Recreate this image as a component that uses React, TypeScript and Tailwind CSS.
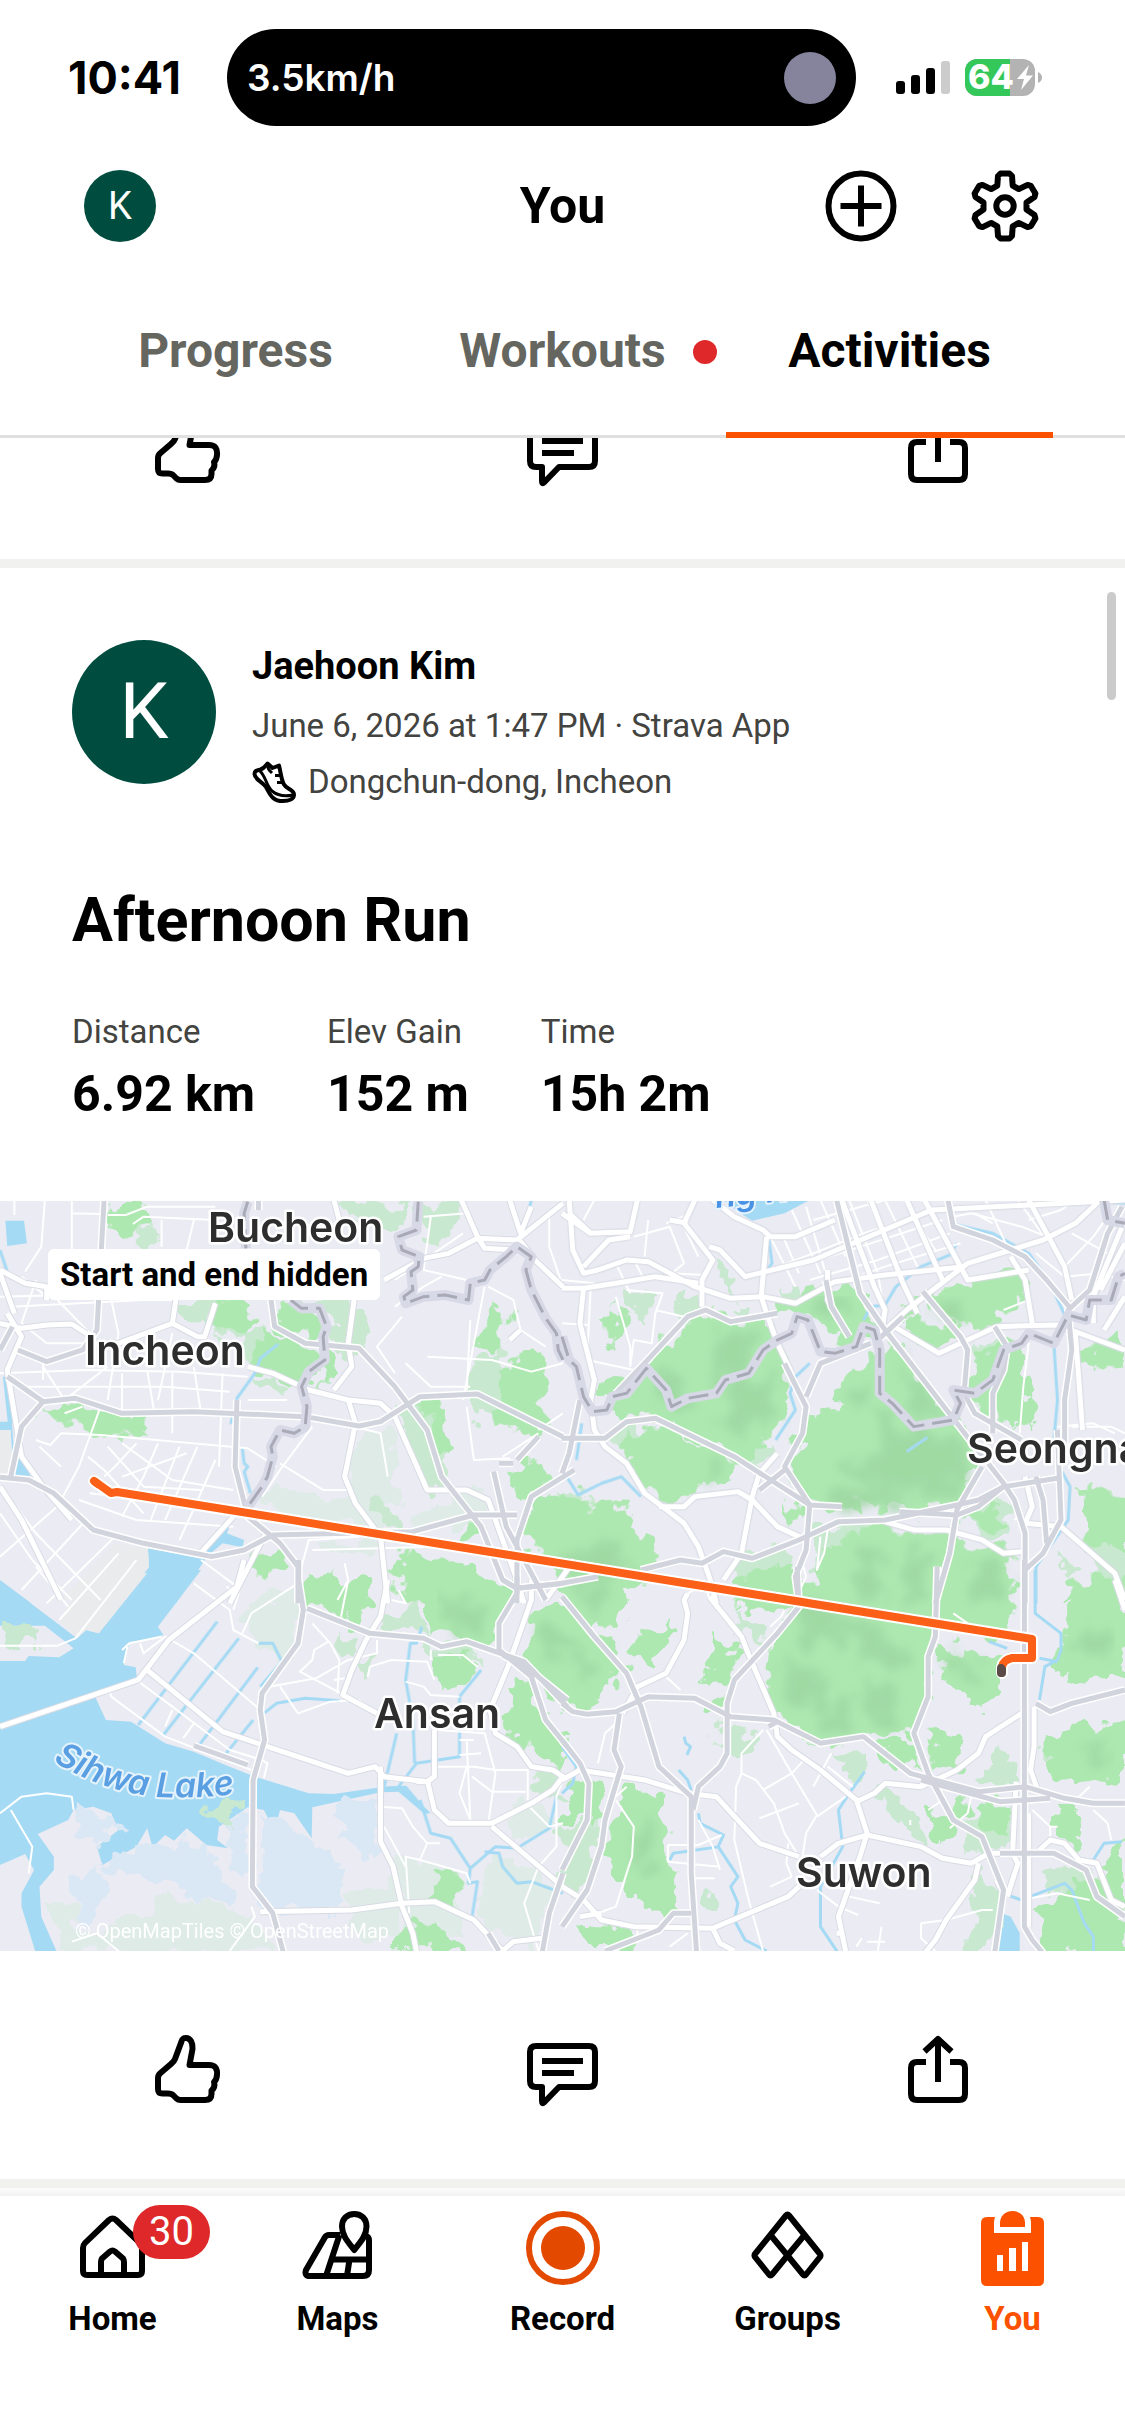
import type { ReactNode } from 'react';

/* ---------- icons ---------- */

type IconProps = { w: number; h: number; sw?: number; children: ReactNode; className?: string };

function Icon({ w, h, sw = 6, children, className = '' }: IconProps) {
  return (
    <svg
      width={w}
      height={h}
      viewBox={`0 0 ${w} ${h}`}
      fill="none"
      stroke="currentColor"
      strokeWidth={sw}
      strokeLinejoin="round"
      aria-hidden="true"
      className={`shrink-0 overflow-visible ${className}`}
    >
      {children}
    </svg>
  );
}

function gearPath() {
  const pts: string[] = [];
  const put = (x: number, y: number, deg: number) => {
    const a = (deg * Math.PI) / 180;
    const px = 36 + x * Math.cos(a) - y * Math.sin(a);
    const py = 36 + x * Math.sin(a) + y * Math.cos(a);
    pts.push(`${px.toFixed(1)} ${py.toFixed(1)}`);
  };
  for (let k = 0; k < 6; k++) {
    const deg = k * 60;
    put(-7, -30, deg);
    put(-4.5, -32.5, deg);
    put(4.5, -32.5, deg);
    put(7, -30, deg);
    put(21.5, -3.5, deg - 60);
    put(21.5, 3.5, deg - 60);
  }
  return `M${pts.join('L')}Z`;
}

const GearIcon = () => (
  <Icon w={72} h={72}>
    <path d={gearPath()} />
    <circle cx="36" cy="36" r="8.7" />
  </Icon>
);

const PlusIcon = () => (
  <Icon w={72} h={72}>
    <circle cx="36" cy="36" r="32.5" />
    <path d="M36 15.500V56.500M15.500 36H56.500" />
  </Icon>
);

const ThumbIcon = () => (
  <Icon w={66} h={68}>
    <path d="M34.500 30L37.500 14C38 8 35.500 3 31 3C28 3 27.200 4 26.500 6.500L20 24C19.200 26.300 18 27.500 16 29L5.500 38C3.700 39.500 3 40.500 3 43V54C3 57.500 4.500 58.500 7.500 58.500H13C15.500 58.500 17 59 18.500 60.500L21.500 63.500C22.800 64.700 24 65 25.500 65H50C54.500 65 56.500 63 56.500 59V55.500C59 53.500 60 50.500 59 47C62.500 44 63 36 60.500 32.500C59 30.600 57 30 54 30Z" />
  </Icon>
);

const CommentIcon = () => (
  <Icon w={71} h={63}>
    <path d="M9 3H62Q68 3 68 9V38Q68 44 62 44H32L17 59.500Q15 61.500 15 58V44H9Q3 44 3 38V9Q3 3 9 3Z" />
    <path d="M15 18H56M15 30H47" />
  </Icon>
);

const ShareIcon = () => (
  <Icon w={60} h={68}>
    <path d="M18 27H9Q3 27 3 33V59Q3 65 9 65H51Q57 65 57 59V33Q57 27 51 27H42" />
    <path d="M30 47V5M16.500 16.500L30 4L43.500 16.500" />
  </Icon>
);

const ShoeIcon = () => (
  <Icon w={44} h={42} sw={4} className="text-black">
    <path d="M15.500 2.500L20.500 7L27 4.500C29 12 29 18 32 23.500C34.500 28 42 29 42 33.500C42 38 37 40 31 40C20 40 18 33 14 26C10 20 3 19 2.500 13C2.500 10 4 9.500 8.500 8.500C12 7.500 13 5.500 15.500 2.500Z" />
    <path d="M8 10C14 16 14 24 20 30C26 35 34 35.500 41 34" strokeWidth="3" />
    <path d="M15.500 3C15.500 8 17 9 20 12M23 14.500H30M25 21.500H31" strokeWidth="3" />
  </Icon>
);

const HomeIcon = () => (
  <Icon w={65} h={64}>
    <path d="M3 56V33Q3 30 5 28L29 5Q32.500 2 36 5L60 28Q62 30 62 33V56Q62 60 58 60H7Q3 60 3 56Z" />
    <path d="M21 60V47Q21 45 22 43.500L30 36.500Q32.500 34.500 35 36.500L43 43.500Q44 45 44 47V60" />
  </Icon>
);

const MapsIcon = () => (
  <Icon w={71} h={68}>
    <path d="M38 24H27Q24 24 22.500 27L4 59Q2 65 8 65H61Q67 65 67 59V29Q67 26 64 25M37.500 24L24 65M28.500 48.500H67M47.500 48.500L45 65" />
    <path
      fill="#fff"
      d="M52.300 39C47 32 40 25 40 15.500C40 8 45 3 52.300 3C59.500 3 64.500 8 64.500 15.500C64.500 25 57.500 32 52.300 39Z"
    />
  </Icon>
);

const RecordIcon = () => (
  <Icon w={74} h={74} className="text-[#e34a00]">
    <circle cx="37" cy="37" r="34" />
    <circle cx="37" cy="37" r="22" fill="currentColor" stroke="none" />
  </Icon>
);

const GroupsIcon = () => (
  <Icon w={73} h={68}>
    <path d="M35 4.500Q36.500 2.500 38 4.500L69 43Q70 44.500 69 46L55 63.500Q53.500 65.500 52 63.500L36.500 44.500L21 63.500Q19.500 65.500 18 63.500L4 46Q3 44.500 4 43Z" />
    <path d="M19.500 24L36.500 44.500L53.500 24" />
  </Icon>
);

const YouIcon = () => (
  <Icon w={63} h={75}>
    <g fill="currentColor" stroke="none">
      <path
        fillRule="evenodd"
        d="M6 6H14Q13 9 13 12V22H50V12Q50 9 49 6H57Q63 6 63 12V69Q63 75 57 75H6Q0 75 0 69V12Q0 6 6 6ZM16 44V60H22V44ZM28 37V60H35V37ZM41 31V60H47V31Z"
      />
      <path d="M19 16V12C19 5 24 0 31.500 0C39 0 44 5 44 12V16Z" />
    </g>
  </Icon>
);

/* ---------- map ---------- */

type Tile = {
  at: string;
  land?: string[];
  sand?: string[];
  water?: string[];
  tidal?: string[];
  pale?: string[];
  light?: string[];
  park?: string[];
  shade?: string[];
  river?: string[];
  minor?: string[];
  road?: string[];
  highway?: string[];
  border?: string[];
};

const tiles: Tile[] = [
  {
    at: 'translate(0 -1) scale(0.359 0.3333)',
    sand: ['M320 1030L412 1045L415 1100L350 1200H170Z', 'M0 690H30V820H0Z'],
    water: [
      'M15 62H67L75 130L20 138Z',
      'M0 665H33L40 770L50 760L90 838L38 826L30 695L0 690Z',
      'M8 530H18L38 670H22Z',
      'M0 1138L90 1210H0Z',
      'M412 1045L572 1078L490 1210H350L415 1100Z',
      'M568 1056L650 953L632 1000L680 1020L676 1042L620 1030L585 1062Z',
    ],
    pale: [
      'M750 850L880 900L960 870L1010 700L1080 680L1120 900L1050 1000L900 970L730 920Z',
      'M900 1020H1060V1050H910Z',
      'M1050 1000L1250 900L1330 860L1350 960L1180 990Z',
    ],
    light: [
      'M490 300L620 300L700 400L650 430L560 370L500 350Z',
      'M680 400L750 380L730 500L690 490Z',
      'M900 300H970L1030 400L1000 470L920 430Z',
      'M950 5H1150L1110 110L1010 80L950 40Z',
      'M1170 5H1290L1250 110L1190 130Z',
      'M400 60L440 120L380 150Z',
      'M710 530L790 540V580H730Z',
      'M1110 620L1200 600L1260 860L1190 870Z',
      'M1040 900L1080 880L1110 980L1060 970Z',
      'M1310 500L1400 440L1450 640L1320 660Z',
    ],
    park: [
      'M310 5H400L410 60L350 110L300 100Z',
      'M590 300H680L720 350L690 400L570 380Z',
      'M775 300H850L900 420L780 390Z',
      'M730 390L860 430L900 500L840 560L720 500Z',
      'M900 440L950 460V520L880 560Z',
      'M120 620L230 615L340 650L410 650L405 712L260 700L160 665Z',
      'M1170 600L1225 600L1255 770L1210 780Z',
      'M1380 300L1415 340L1400 450L1310 450Z',
      'M1480 440L1515 480L1510 690L1430 690L1370 640L1400 500Z',
      'M1440 770L1510 790L1520 860L1460 890L1430 860Z',
      'M1500 900L1600 870V1160L1480 1050L1460 970Z',
      'M1290 960L1350 980V1030L1280 1010Z',
      'M700 1090L760 1045L810 1100L740 1140L690 1120Z',
      'M850 1110L940 1120L960 1210H850Z',
      'M1110 1060L1220 1070L1380 1150L1400 1210H1120Z',
    ],
    river: [
      'M775 432L725 475L710 520L660 595L643 672',
      'M675 745L680 790L690 800L680 815L698 880',
      'M1480 0L1455 110',
      'M0 150L20 215',
    ],
    minor: [
      'M40 0V45M125 0L115 140L70 215M200 0V150M200 40L280 42',
      'M300 45H350L410 20H600M370 72L400 50L600 60M450 60V140M540 60L520 150',
      'M0 290L180 285M60 230L130 290M100 240L60 370L130 430L240 430',
      'M30 320L400 300L480 300M160 300L250 400M310 300L330 400L300 600M480 400L440 600',
      'M120 500L180 600L300 500M0 520L240 510L500 515L690 530M60 560H460L640 575M120 480V540',
      'M340 520V630M410 510L430 640M480 520V700M540 500L560 640M620 520L610 800',
      'M100 720L140 735L170 700L280 705L690 745L770 800M230 620L180 640M280 620L220 800L175 890',
      'M110 740L170 800M245 770L290 810L400 940M300 740L400 860L560 870M340 730L480 840L650 870',
      'M380 730L320 800L290 830M440 730L400 830L340 950M500 740L420 960M550 740L460 960M600 780L530 950L500 1020',
      'M220 900L380 960L650 980M250 880L420 900M0 1070L180 900M60 1170L240 960M130 1210L320 1010',
      'M30 900L100 1000L280 1200M0 940L90 1080L200 1200M340 830L520 760M690 600H800M750 640L820 655',
      'M780 790L900 870H970M870 680L780 810L730 890M985 680L1060 700L1080 830',
      'M1120 350L1050 440L1100 520M1100 320L1180 260L1230 230M1130 490L1200 560H1310M1190 470L1370 480L1480 515L1568 490',
      'M1310 360L1300 570M1300 240L1180 210L1200 50M1350 260L1290 600M1360 260L1430 300L1450 390L1520 440M1530 30V140L1568 260',
      'M1180 50L1300 40M1300 620L1320 780L1420 775M1400 770L1500 700M1500 690L1568 640M1290 100L1100 240',
      'M870 1050L1060 1045L1200 1040L1400 1060M840 1100L860 1020L1000 1010M960 1090L970 1140L940 1200M560 1080L660 1160',
    ],
    road: [
      'M0 210L70 250L130 260V300M0 370L60 385L130 375L200 372L240 400M20 340L60 410L20 510L60 770L120 860L200 960',
      'M0 220L40 340M0 860L60 960L170 1200',
      'M240 430L330 430L480 370L550 410L570 410L600 310M480 370L490 300',
      'M690 500L760 520L860 570L970 600L1060 610L1100 650L1190 870H1300L1360 900L1440 1140L1460 1210',
      'M990 270L970 430L980 500L930 570M970 600L990 670L960 830L990 910L1060 1010L1080 1210',
      'M930 0L945 60M1070 240L1180 175L1250 160L1330 115L1440 120L1568 10M1285 0L1330 110L1350 145L1440 150',
      'M1440 110L1490 180L1568 260M1420 0L1450 100L1480 20',
      'M550 1070L650 950M640 1210L740 1000',
      'M1520 1200L1600 1080M1450 390L1420 420',
    ],
    highway: [
      'M290 0L270 390L230 450L130 485L50 450M720 0V30',
      'M0 450L35 380M20 530L120 605L210 595L340 640L540 635L850 650L1000 678L1060 665L1170 590L1330 582L1568 710',
      'M120 605L60 680L30 830M0 832L80 840L150 880L260 990L400 1030L590 1070L680 1050L760 1005L1150 995L1320 945H1440',
      'M755 300L765 380L850 430L1000 445L1100 560L1190 690L1230 830L1340 980L1400 1140L1440 1165L1568 1150',
      'M660 600L655 800L690 950L780 1030L830 1100V1210',
      'M1375 815L1410 980L1520 1200M1600 810L1480 890L1440 1020V1210M1390 790H1430M1440 780L1500 710',
    ],
    border: [
      'M690 5L680 40L685 145M810 300L840 325L890 325L910 380L900 410L905 480L885 495L860 515L840 560L855 620L850 680L820 700L780 690L755 740L760 770L745 830L730 860L690 920',
      'M1165 5L1160 90L1110 110L1120 150L1168 170L1165 200L1145 215L1150 270L1125 290L1130 310L1180 290L1240 285L1305 300L1310 250L1350 240L1365 210L1410 170L1440 140L1480 170L1465 210L1480 270L1520 355L1550 400L1555 450L1568 480',
    ],
  },
  {
    at: 'translate(562 -1) scale(0.359 0.3333)',
    water: ['M450 0H690L620 40L530 62L490 35Z'],
    light: [
      'M440 180L480 240L470 280L430 230Z',
      'M170 250L240 280V370L190 350Z',
      'M320 290L400 290L380 400L330 330Z',
      'M470 300L520 290V340H480Z',
      'M620 260H660V300H620Z',
      'M130 660L220 680L180 760L140 720Z',
      'M500 740L590 720L540 810Z',
      'M1140 450L1240 410L1230 560L1140 560Z',
      'M700 990L880 970L1250 1050L1240 1200L700 1100Z',
      'M1100 930L1220 880L1260 1000L1200 1030Z',
      'M1440 880L1568 870V1200L1480 1100Z',
      'M0 860L60 880L40 960Z',
      'M450 1100L640 1020L650 1100L500 1150Z',
      'M1380 1060L1430 1100L1420 1150Z',
    ],
    park: [
      'M150 310L180 350L165 440L110 380Z',
      'M360 340L420 340L480 370L580 350L600 430L640 560L600 680L490 800L420 740L280 660L180 660L110 600L120 540L230 510L270 430Z',
      'M590 310L760 250L820 240L840 320L890 400L820 430L760 400L700 360L600 340Z',
      'M950 320L1110 240L1280 220L1300 300L1210 330L1220 370L1130 400L1070 380L1020 290L950 380Z',
      'M980 350L1110 400L1060 450L960 400Z',
      'M150 740L200 680L280 680L400 740L490 800L440 840L300 900L230 860L190 780Z',
      'M760 560L850 480L930 430L1020 560L1100 660L1130 700L1170 800L1110 900L1000 940L690 910L630 820L690 640L780 620Z',
      'M1130 470L1240 430L1290 420L1290 680L1210 660L1140 600Z',
      'M0 880L90 920L160 920L220 1010L270 1070L200 1180L0 1160Z',
      'M490 1130L560 1090L650 1080L650 1200H480Z',
      'M740 1020L880 980L1070 1010L1260 1060V1210H690Z',
      'M1450 440L1520 430L1568 400V480L1460 510Z',
      'M1440 860L1530 880L1568 850V1060L1450 1000Z',
      'M1400 1150L1568 1130V1210H1400Z',
      'M620 910L680 930L660 960Z',
      'M1180 910L1250 960L1200 1000L1120 960Z',
    ],
    shade: [
      'M260 470L360 560L350 640L270 590Z',
      'M430 390L550 390L510 520L410 570L400 470Z',
      'M480 540L610 530L580 640L490 720L440 640Z',
      'M880 620L950 690L1100 710L1150 800L1080 880L880 860L760 820L880 780Z',
      'M720 860L900 870L1020 900L880 925H740Z',
      'M800 570L850 540L860 600L800 640Z',
      'M940 470L1000 570L1060 640L980 650Z',
      'M700 300L800 290L800 340L740 350Z',
      'M1030 320L1110 300L1120 380L1060 360Z',
      'M400 760L460 800L420 840Z',
      'M0 1090L120 1000L210 1110L60 1150Z',
      'M820 1040L890 1030V1200H830Z',
      'M960 1040L1020 1060L1010 1200H950Z',
      'M1130 1080L1240 1080V1200H1150Z',
    ],
    river: [
      'M575 110L585 190L570 210M1100 130L1080 165L1000 200L930 260L900 315L860 320L840 360',
      'M1100 75L1200 100L1300 160L1360 250L1400 345M1370 430L1380 600L1370 720M1390 810L1415 860L1410 960L1320 1100V1210',
      'M690 490L650 530L635 580L650 630L595 720M960 755L1018 712M55 670L40 780M10 825L45 885L110 850L165 830L220 890',
      'M1450 0L1568 10',
    ],
    minor: [
      'M90 0L60 60M200 110L300 80L340 190L300 225M240 60L230 170M330 60L380 170M150 190L190 280M200 180L230 240M290 70L360 40M300 220L400 225',
      'M80 260L75 370L70 480L200 510M180 270L280 280L260 340L250 430L200 420L190 500M190 500V440L150 290M260 330L340 350M0 240L90 250M0 370L75 375',
      'M640 30L720 220M680 20L740 240M720 0L790 170M700 60L800 30L900 0M580 110L650 260M600 200L700 160L840 100L1040 30',
      'M660 200L860 130L1060 60M690 240L880 180L1080 100M820 230L900 200L1110 130M800 0L880 220L900 350M850 0L930 200M900 0L990 200M950 0L1040 150M1000 0L1080 130',
      'M620 120L660 220M1090 50L1140 40L1280 80L1350 110M1150 40L1200 70M1180 0L1240 140M1270 0L1350 120L1400 200M1300 60L1390 30L1430 0M1420 100L1520 160M1400 200L1480 110L1520 50',
      'M1320 160L1400 230L1500 220M1230 330L1300 300L1310 400M1280 440L1300 430L1285 560L1275 700M1490 220L1568 240M1560 100L1500 220',
      'M740 990L730 1060L710 1110L720 1010M670 1090L680 1130L650 1200M1420 680H1530L1568 700M1380 680L1480 670L1540 700',
      'M1270 950L1260 960M1330 850L1340 980M350 1180L400 1150L410 1200',
    ],
    road: [
      'M0 40L80 100L190 95L210 0M20 0L30 150L60 220L100 210L180 180L240 185L370 260L470 295L560 290L650 310L760 245L900 225L1120 200',
      'M80 100L20 40M370 0L340 70L420 180L390 240V320M300 60L350 70M410 140L440 150L510 230L700 180L1030 30L1568 0',
      'M420 0L480 50L560 90L580 110H650L760 60M570 110L555 290L570 340L600 430L640 520',
      'M0 265L60 265L150 250L260 230L380 250M60 265L50 370L90 540L80 600L90 690L120 740L180 790L230 880L280 920L340 970L380 1040L410 1130L430 1210',
      'M60 200L130 120L190 110M890 400L900 330L870 260L800 60L780 0M910 380L960 330L1130 190L1250 150L1340 120L1430 70L1500 0',
      'M860 0L950 250L990 340M960 0L1060 240M1010 0L1130 240L1300 210M1250 170L1290 240L1310 370',
      'M910 370L1050 460L1210 380L1380 375L1568 450M1300 0L1400 200L1420 300M1568 60L1480 290L1480 370M1568 130L1500 270M1568 290L1510 390',
      'M270 920H340L370 890L490 875L530 900L600 980L660 1010M530 890L550 820L600 760M530 890L500 1060L450 1140',
      'M900 965L980 990L1070 990L1170 1020L1230 1060L1280 1055M1390 980L1540 1120L1568 1200M1290 830L1310 920L1290 970L1390 980',
      'M1430 400L1450 690M740 210V300L770 360',
    ],
    highway: [
      'M0 715H120L180 665L260 655L480 770L690 915L780 920M940 935L1100 945L1160 920L1230 860L1380 835M0 1150L100 1130',
      'M150 580L230 490L350 350L400 330L470 365L600 340M620 490L680 620L670 700L620 800L690 915L680 1050L650 1130L660 1210',
      'M765 0L830 280L900 390L1100 670L1230 850L1260 900L1290 1000V1210',
      'M735 240L750 320L800 410M860 430L720 490L680 590M550 870L620 810M870 430L950 350M1005 275L1110 410L1130 450L1120 580L1150 640L1280 720',
      'M220 1110L330 1080L390 1090L450 1055L530 1075L660 1020L770 965L900 960L1100 915L1160 900L1230 860M1170 800L1100 930L1080 1060L1040 1210',
      'M1075 0L1090 80L1200 120L1290 170L1350 240L1420 330M1560 20L1520 100L1470 270L1410 330L1420 450L1400 600V780M1205 380L1240 440L1230 510L1200 580V700M1380 690L1390 960L1340 1060L1290 1110M1320 830L1340 900L1350 1030',
      'M50 600L20 760L0 820',
    ],
    border: [
      'M0 410L20 480L40 500L60 590L85 635L125 630L140 590L180 580L235 505L290 570L305 620L350 595L430 580L455 540L520 520L560 450L600 420L640 400L655 350L685 360L720 455L760 460L820 440L840 380L870 390L885 450V580L920 610L980 680L1090 660L1110 610L1090 570L1150 580L1200 540L1230 450L1280 430L1300 400L1370 430L1410 345L1460 360L1470 300L1530 300L1550 230L1568 220',
      'M1510 0L1520 60L1568 70',
    ],
  },
  {
    at: 'translate(0 379) scale(0.359 0.3333)',
    water: [
      'M0 0L215 175L240 150L275 160L320 100L400 -30H560L440 140L455 165L360 190L345 255L378 262L382 300L265 350L295 420L365 425L460 490L540 515L640 560L710 590L860 640L930 642L1060 622L1120 618L1200 700L1180 700L1110 635L1060 637L870 682L868 775L820 700L780 690L765 752L735 690L690 682L610 740L605 780L635 805L575 795L520 745L485 782L460 765L425 802L410 745L380 800L285 855L270 800L330 750L310 700L260 680L205 690L190 720L105 762L150 830V870L110 920L115 1010L160 1120H100L60 980V940L95 870L70 822L0 855Z',
    ],
    land: ['M0 137H125L205 205L165 232L80 228L70 243H0Z', 'M-5 -120L170 120L215 175L100 80L0 0Z'],
    sand: ['M250 -20H410L320 100L275 160L240 150L215 175L165 120Z'],
    tidal: [
      'M210 890L270 860L300 930L260 1040L210 1000Z',
      'M280 860L400 790L560 800L640 900L630 970L560 960L440 890L330 900Z',
      'M950 670L1050 650V820L950 780Z',
      'M730 690L860 770L950 850V990H760L720 920Z',
      'M200 690L300 690L330 750L270 790L210 760Z',
      'M640 720L690 690V900L640 860Z',
    ],
    pale: [
      'M670 80L830 20V200L780 250L680 160Z',
      'M1080 830L1200 850L1290 890L1280 1060L1140 1040Z',
      'M130 970L200 960L230 1060L420 1000L480 940L560 960L700 1010L770 1120H170Z',
      'M1400 720L1480 670L1560 740L1450 810Z',
      'M1350 850L1450 840L1550 920L1480 1120L1330 1020Z',
      'M960 940L1110 920L1120 1090H1000Z',
    ],
    light: [
      'M8 138H95L105 192H8Z',
      'M570 665L690 660L640 700L670 745L600 725Z',
      'M1060 110L1160 60L1210 170L1060 160Z',
      'M950 150L1000 180L970 230L940 200Z',
      'M1000 230L1060 220L1010 300Z',
      'M1480 560L1568 550V650L1490 640Z',
      'M1160 200L1330 190L1340 270L1220 250Z',
    ],
    park: [
      'M860 0H1020L1040 100L1000 150L910 90Z',
      'M1130 0H1430L1400 130L1380 200L1300 180L1210 160L1200 60Z',
      'M1200 240L1330 220L1310 290L1260 320L1220 330Z',
      'M1490 100L1568 60V370L1490 280L1450 220Z',
      'M1410 330L1470 300L1530 430L1568 470V560L1490 520L1420 470Z',
      'M1200 880L1280 890L1290 930L1240 980L1200 950Z',
      'M1150 1020L1230 1040L1320 1120H1060Z',
      'M1560 660V720H1580V660Z',
    ],
    shade: ['M1220 60L1350 70L1330 160L1260 150Z', 'M1500 150L1568 140V260L1510 240Z'],
    river: [
      'M605 125L385 435M665 175L455 465M718 262L555 495M705 420L630 520M720 190H760L785 245L725 320',
      'M735 400L770 370L850 355L945 362M1175 140L1160 190L1143 190L1130 300L1150 420L1155 550M1340 270L1280 350V530L1160 550L1110 620M1105 460L1070 620',
      'M1170 660L1200 760L1255 775L1310 865L1380 800L1440 805L1530 745L1550 650M1310 865L1305 910L1330 905L1315 1010M1350 815L1390 820L1400 860L1440 910L1480 905L1568 940',
      'M1060 625L1130 622L1190 700',
    ],
    minor: [
      'M0 197H160L210 175L380 -60M100 -40L190 80M165 120L330 -80M540 10L640 90L650 150L720 190M630 20L665 40L650 90',
      'M340 210L360 190L450 170M345 250L355 200M390 190L400 220L460 170L540 220L720 385M380 300L480 380L640 510L730 540L745 550L735 595M305 330L310 350L460 470L700 570M540 430L510 475M480 390L460 440',
      'M675 160L700 100L830 10M870 130L920 190L945 240L940 340M915 185L875 210L870 240L835 275L950 340M750 320L880 295L970 240L1050 220V180M780 320L830 400L920 365L1000 360L1050 400M930 300L960 295M1025 290L1030 260L1090 240L1190 245L1210 300M1200 210V240M1220 225H1290L1330 260',
      'M1130 305L1180 320L1200 345L1280 350M1220 450L1350 460L1380 580L1360 730M1220 560L1320 560L1380 570H1470V660M1280 480H1320M1280 525L1340 520M1300 480L1310 720L1280 640L1300 560M1315 590L1370 635H1465M1465 670L1530 740L1568 730',
      'M1060 680L1120 685L1150 740L1190 790H1225M1190 790L1170 840L1130 830L1140 1000M1070 740L1130 860M1170 840L1300 880L1310 910M1500 860L1460 970L1500 1113M1568 600L1550 650V800L1500 860',
      'M950 110L970 0M1110 30L1130 70L1090 60M700 980L710 1010L640 1113M200 1085L270 1060L330 1113M0 700L60 650L130 640L200 650L205 690M30 690L90 800L80 880',
    ],
    road: [
      'M0 440L385 300L470 180L660 20L680 -60M410 270L620 455L970 580L1045 560L1070 590L1190 605L1210 590V450',
      'M1080 0L1060 110L1020 180L980 270L955 345L1050 400M1190 600L1210 690L1250 730H1370L1480 670L1540 630L1568 590L1540 570L1480 560L1440 500L1380 460L1365 390L1415 260L1480 60V0',
      'M1060 560V785L1095 860L1120 980L1150 1060L1160 1113M725 995L980 990L1120 970L1210 965L1320 1020L1400 1113L1430 1085L1510 1075M1370 740L1568 920',
      'M1160 605H1200',
    ],
    highway: [
      'M832 -60V0L845 90L830 190L730 340L725 390L737 480L705 600L703 920L760 1000L790 1120M540 497L690 555',
      'M855 85L1030 160L1180 175L1230 200L1300 185L1460 245L1580 380M1440 -10V40L1390 130V210L1480 290L1520 420L1580 500M1400 0L1440 25L1568 10M1568 880L1530 1000L1510 1120M1360 1060L1390 1113M1400 225L1470 265L1580 360',
    ],
  },
  {
    at: 'translate(562 379) scale(0.359 0.3333)',
    water: ['M1225 1000L1250 1010L1275 1060V1120H1215Z'],
    light: [
      'M420 440L540 450L530 500L480 530L420 490Z',
      'M750 520L840 510L860 580L790 580Z',
      'M870 640L940 640L1020 760L1000 790L960 740Z',
      'M1150 610L1200 500L1250 510L1260 610Z',
      'M1340 470H1420V540L1340 560Z',
      'M0 740L100 720L90 900L30 960L0 900Z',
      'M1160 850L1220 900L1200 1113H1130Z',
      'M1330 880L1450 850L1480 940L1360 930Z',
      'M370 930L430 940L450 1000L380 980Z',
      'M1110 740L1250 670L1260 800L1120 830Z',
      'M480 90L560 150L580 220L500 150Z',
    ],
    park: [
      'M0 -60H220L230 0L140 120L60 150L0 60Z',
      'M0 90L110 170L180 280L130 340L20 400L0 350Z',
      'M190 140L310 130L280 260L190 230Z',
      'M430 170L490 200L460 330L400 310Z',
      'M410 350L450 360L455 410L405 390Z',
      'M480 -10H760L1040 -30L1260 20L1260 170L1040 150L1010 380L980 470L830 460L720 490L600 420L560 250L640 100L490 90Z',
      'M1050 190L1230 250L1210 360L1170 400L1070 300Z',
      'M850 470L980 490L990 570L900 530Z',
      'M1010 460L1110 470L1100 570L1030 580Z',
      'M60 600L120 610L110 720L0 720V650Z',
      'M190 620L280 640L270 780L340 930V1000L270 1010L160 900L130 800L150 680Z',
      'M40 1020L130 1030L210 1060L200 1113H100Z',
      'M1020 690L1130 650L1120 720L1050 790Z',
      'M1370 690L1440 690L1430 790L1390 780Z',
      'M1420 80L1480 30L1568 50V300L1400 310L1380 240Z',
      'M1340 470L1420 440L1568 420V600L1430 620L1350 560Z',
      'M1310 990L1360 960L1568 850V1120H1350Z',
      'M1480 850L1568 790V950Z',
      'M1150 690L1240 660V750L1170 740Z',
    ],
    shade: [
      'M640 60L760 70L790 200L670 190Z',
      'M760 100L900 150L980 270L850 240Z',
      'M620 250L740 270L710 410L630 350Z',
      'M830 280L940 320L910 440L830 390Z',
      'M740 370L800 360L790 460L740 450Z',
      'M20 10L140 20L90 110Z',
      'M1060 220L1180 280L1160 320L1080 270Z',
      'M210 700L250 720L250 900L200 840Z',
      'M1430 140L1540 160L1520 240L1430 210Z',
      'M30 200L120 220L60 320Z',
      'M1440 500L1530 510L1500 570Z',
    ],
    river: [
      'M340 470L345 490L358 500L348 525M325 570L350 600L360 630M380 700L385 730L450 765L435 800L490 890L470 920L490 970L480 1020L510 1080L570 1113M300 840L310 820L440 800',
      'M843 575L800 640L770 690L782 800L720 920V1040L770 1120M1318 -30V100L1390 160V210L1380 240L1345 260L1330 360M1330 235L1380 245M1190 185L1240 205',
      'M1240 945L1280 960L1400 910L1420 930L1455 1030L1480 1070V1120M1480 840L1510 790L1560 785M0 500L40 560L30 610L0 640M1270 870L1240 950',
    ],
    minor: [
      'M150 430L120 460L100 550M290 290L330 330M560 450L500 520V580L485 620L480 780L520 960L560 1113M500 580L540 600L590 670L620 760L660 830M570 450L640 580L710 705L680 760L670 830',
      'M560 630L640 580L670 545M550 715L660 670M630 790L625 850L640 890M700 620L750 520M740 560L810 620M790 650L710 710M580 140L610 110L620 90',
      'M150 660L200 740L195 830L150 980L100 1000M180 620L150 650M295 795V845L440 860M295 795H380L445 765M370 895H425M380 720L420 800L440 870M300 1100L350 1060',
      'M580 920L640 890M800 950L885 970M710 930L770 980L825 1005M890 1040L880 1113M820 1100L835 1075M850 1085H900',
      'M1000 1030L1070 1020L1170 990H1200M1000 1030L1000 1075L1040 1113M1020 690L1060 660M1140 650L1130 700L1080 745M1310 690L1360 740L1380 740M1360 740V770M1480 690L1520 730L1530 780M1280 960L1380 940L1470 960M1080 600L1110 620',
      'M1090 100L1130 130M1440 650L1470 620M970 720V735M210 1040V1080',
    ],
    road: [
      'M350 40L340 60L350 100L340 180L290 280L210 320L170 400M410 50L500 170L530 250L590 400L600 470L640 510L720 570L820 660L850 760L830 830L770 1010L790 1113',
      'M0 600L50 570L230 600L350 640L430 650L550 790L660 830M820 665L870 640L900 610L1000 620L1100 570L1160 520L1180 470L1280 400',
      'M850 765L1000 800L1060 835L1140 850L1190 820L1220 820M850 765L770 790L720 830M1160 850L1150 900L1070 1020L1040 1080L1010 1120M660 920L630 950L420 1045L200 1040L110 1020L60 960L0 920',
      'M420 1045L440 1090L480 1113M1315 380V500L1305 570L1325 630M1265 605L1255 820L1270 850L1240 950M1300 700V1040M1330 810L1360 780L1400 790L1440 840L1490 850L1530 960L1568 980M780 1060H765M1210 900L1230 940',
      'M1540 0L1568 90M50 1010L110 1000',
    ],
    highway: [
      'M1288 -60V800V1040L1310 1080L1340 1120M0 50L90 170L180 280L220 380L270 560L360 650V880L375 1120',
      'M0 370L30 395L70 403L150 395L240 350L370 355L470 410L590 420L720 490L840 470L970 580L1160 635L1290 620L1400 655L1480 670H1568M1000 600L1220 665L1360 655',
      'M655 -40L660 80L600 160L480 300L460 370V520L440 560L380 620L365 690M160 400L145 510L165 560L120 720L110 800L70 930L0 1040M0 480L50 550L75 610L70 720L0 870',
      'M1045 -40L1040 170L1020 230V350L980 460L1020 580L1090 720L1170 770L1230 930L1205 1120M1220 820L1370 820L1460 870L1490 950L1568 1010M1320 370L1360 395L1420 370L1568 330M120 1113L270 1050L310 1000H360',
      'M575 440L600 425',
    ],
  },
];

type LayerKey = Exclude<keyof Tile, 'at'>;

function Layer({ name, fill, stroke, width, dash }: { name: LayerKey; fill?: string; stroke?: string; width?: number; dash?: string }) {
  return (
    <>
      {tiles.map((tile, i) => (
        <g key={i} transform={tile.at} fill={fill ?? 'none'} stroke={stroke ?? 'none'} strokeWidth={width} strokeDasharray={dash}>
          {(tile[name] ?? []).map((d) => (
            <path key={d} d={d} vectorEffect="non-scaling-stroke" />
          ))}
        </g>
      ))}
    </>
  );
}

function RouteMap() {
  const route = 'M94 280L111 292L117 291L1032 438V457L1012 457Q1003 459 1002 466';
  return (
    <svg viewBox="0 0 1125 750" className="block w-full bg-[#eaebf3]" role="img" aria-label="Map of the run from Incheon to Seongnam">
      <defs>
        <filter id="ragged" x="0" y="0" width="100%" height="100%">
          <feTurbulence type="fractalNoise" baseFrequency="0.045" numOctaves="3" seed="4" result="n" />
          <feDisplacementMap in="SourceGraphic" in2="n" scale="36" xChannelSelector="R" yChannelSelector="G" />
        </filter>
        <filter id="relief" x="0" y="0" width="100%" height="100%">
          <feTurbulence type="fractalNoise" baseFrequency="0.06" numOctaves="2" seed="9" result="n" />
          <feDisplacementMap in="SourceGraphic" in2="n" scale="44" xChannelSelector="R" yChannelSelector="G" />
          <feGaussianBlur stdDeviation="4" />
        </filter>
        <path id="lake" d="M53 560Q105 592 160 596Q205 598 260 590" />
      </defs>
      <Layer name="water" fill="#a5daf4" />
      <Layer name="land" fill="#eaebf3" />
      <Layer name="sand" fill="#eaebed" />
      <g filter="url(#ragged)">
        <Layer name="tidal" fill="#dae7f4" />
        <Layer name="pale" fill="#deebe7" />
        <Layer name="light" fill="#c9e8d0" />
        <Layer name="park" fill="#aee8b1" />
      </g>
      <g filter="url(#relief)" opacity="0.8">
        <Layer name="shade" fill="#9dd6a1" />
      </g>
      <g strokeLinejoin="round">
        <Layer name="river" stroke="#a5daf4" width={3} />
        <Layer name="minor" stroke="#fff" width={2} />
        <Layer name="road" stroke="#d9dbe4" width={7} />
        <Layer name="road" stroke="#fff" width={5} />
        <Layer name="highway" stroke="#fff" width={8} />
        <Layer name="highway" stroke="#d2d4dd" width={5} />
        <Layer name="border" stroke="#d8d9e6" width={10} />
        <Layer name="border" stroke="#a9aab8" width={3} dash="20 8" />
      </g>
      <g fill="none" strokeLinejoin="round" strokeLinecap="round">
        <path d={`${route}V472`} stroke="#fff" strokeWidth="12" />
        <path d="M1002 466V472" stroke="#5a4b48" strokeWidth="8" />
        <path d={route} stroke="#fc6018" strokeWidth="8" strokeLinecap="butt" />
        <path d="M94 280L98 283" stroke="#fc6018" strokeWidth="8" />
        <path d="M1001 467V472" stroke="#5a4b48" strokeWidth="8" />
      </g>
      <g fontFamily="Inter, sans-serif" fontSize="41" fontWeight="600" fill="#2e2e2e" stroke="#fff" strokeWidth="5" strokeLinejoin="round" paintOrder="stroke">
        <text x="208" y="41">Bucheon</text>
        <text x="85" y="164">Incheon</text>
        <text x="967" y="262">Seongnam</text>
        <text x="374" y="527">Ansan</text>
        <text x="796" y="686">Suwon</text>
      </g>
      <g fontFamily="Inter, sans-serif" fontSize="34" fontWeight="600" fontStyle="italic" stroke="#e6f3fb" strokeWidth="4" strokeLinejoin="round" paintOrder="stroke">
        <text fill="#5b9fe3">
          <textPath href="#lake">Sihwa Lake</textPath>
        </text>
        <text fill="#4a92e6" transform="rotate(-6 716 8)" x="716" y="7">
          ng R
        </text>
      </g>
      <text x="75" y="737" fontFamily="Roboto, sans-serif" fontSize="20" fill="#fff">
        © OpenMapTiles © OpenStreetMap
      </text>
    </svg>
  );
}

/* ---------- page parts ---------- */

function StatusBar() {
  return (
    <div className="grid grid-cols-[227px_1fr_269px] items-center pt-[29px] font-['Inter',sans-serif]">
      <time className="pl-[68px] text-[45px] leading-none font-bold">10:41</time>
      <div className="flex h-[97px] items-center justify-between rounded-full bg-black pr-5 pl-5 text-white">
        <span className="text-[37px] leading-none font-semibold">3.5km/h</span>
        <span className="size-[52px] rounded-full bg-[#86849d]" />
      </div>
      <div className="flex items-center gap-[15px] pl-10">
        <svg width="54" height="34" viewBox="0 0 54 34" aria-label="Signal">
          <rect x="0" y="20" width="9" height="13" rx="3" />
          <rect x="15" y="14" width="9" height="19" rx="3" />
          <rect x="30" y="7" width="9" height="26" rx="3" />
          <rect x="45" y="0" width="9" height="33" rx="3" fill="#ccc" />
        </svg>
        <svg width="78" height="37" viewBox="0 0 78 37" aria-label="Battery">
          <defs>
            <clipPath id="cell">
              <rect width="70" height="37" rx="12" />
            </clipPath>
          </defs>
          <g clipPath="url(#cell)">
            <rect width="70" height="37" fill="#b3b3b3" />
            <rect width="45" height="37" fill="#34c759" />
          </g>
          <path d="M73 13Q77 15 77 18.500Q77 22 73 24Z" fill="#b3b3b3" />
          <text x="3" y="30" fontFamily="Inter, sans-serif" fontSize="34" fontWeight="800" fill="#fff">
            64
          </text>
          <path d="M64 6L52 20H59L56 31L68 16.500H61Z" fill="#fff" />
        </svg>
      </div>
    </div>
  );
}

function Actions() {
  return (
    <div className="grid h-[228px] shrink-0 grid-cols-3 pt-[84px]">
      <button type="button" aria-label="Give kudos" className="flex h-[68px] justify-center">
        <ThumbIcon />
      </button>
      <button type="button" aria-label="Comment" className="flex h-[68px] justify-center pt-2">
        <CommentIcon />
      </button>
      <button type="button" aria-label="Share" className="flex h-[68px] justify-center">
        <ShareIcon />
      </button>
    </div>
  );
}

function Stat({ label, value }: { label: string; value: string }) {
  return (
    <div>
      <dt className="text-[33px] leading-10 text-[#43433f]">{label}</dt>
      <dd className="mt-3 text-[50px] leading-[60px] font-bold">{value}</dd>
    </div>
  );
}

function NavItem({ label, icon, active, badge }: { label: string; icon: ReactNode; active?: boolean; badge?: string }) {
  return (
    <a
      href={`#${label.toLowerCase()}`}
      aria-current={active ? 'page' : undefined}
      className={`flex flex-col items-center ${active ? 'text-[#fc5200]' : 'text-black'}`}
    >
      <span className="relative flex h-[76px]">
        {icon}
        {badge && (
          <span className="absolute -top-1.5 left-[53px] flex h-[54px] w-[77px] items-center justify-center rounded-full bg-[#de2829] text-[40px] leading-none text-white">
            {badge}
          </span>
        )}
      </span>
      <span className="mt-3 text-[33px] leading-10 font-bold">{label}</span>
    </a>
  );
}

export default function App() {
  return (
    <div className="relative min-h-screen overflow-hidden bg-white font-['Roboto',sans-serif] text-black">
      <StatusBar />

      <header className="grid grid-cols-3 items-center pt-11">
        <button type="button" aria-label="Profile" className="ml-[84px] flex size-[72px] items-center justify-center rounded-full bg-[#004d40] text-[38px] leading-none text-white">
          K
        </button>
        <h1 className="text-center text-[50px] leading-none font-bold">You</h1>
        <div className="flex justify-end gap-[72px] pr-[84px]">
          <button type="button" aria-label="Add">
            <PlusIcon />
          </button>
          <button type="button" aria-label="Settings">
            <GearIcon />
          </button>
        </div>
      </header>

      <div role="tablist" className="grid h-[196px] grid-cols-3 border-b-[3px] border-[#e0e0e0] px-[72px] text-[48px] leading-none font-bold text-[#666660]">
        <button type="button" role="tab" aria-selected="false" className="pt-6">
          Progress
        </button>
        <button type="button" role="tab" aria-selected="false" className="relative pt-6">
          Workouts
          <span className="absolute top-[98px] right-[9px] size-6 rounded-full bg-[#de2829]" />
        </button>
        <button type="button" role="tab" aria-selected="true" className="-mb-[3px] border-b-[6px] border-[#fc5200] pt-7 text-black">
          Activities
        </button>
      </div>

      <main>
        <div className="flex h-[121px] flex-col justify-end overflow-hidden">
          <Actions />
        </div>

        <article className="border-y-[9px] border-[#f1f1ef]">
          <div className="flex gap-9 px-[72px] pt-[72px]">
            <div className="flex size-36 shrink-0 items-center justify-center rounded-full bg-[#004d40] text-[78px] leading-none text-white">K</div>
            <div>
              <h2 className="text-[38px] leading-[52px] font-bold">Jaehoon Kim</h2>
              <p className="mt-2 text-[33px] leading-[52px] text-[#43433f]">June 6, 2026 at 1:47 PM · Strava App</p>
              <p className="mt-1 flex items-center gap-3 text-[33px] leading-[52px] text-[#43433f]">
                <ShoeIcon />
                Dongchun-dong, Incheon
              </p>
            </div>
          </div>
          <h3 className="mt-[76px] px-[72px] text-[61px] leading-[72px] font-bold">Afternoon Run</h3>
          <dl className="mt-[56px] flex gap-[72px] px-[72px] pb-[77px]">
            <Stat label="Distance" value="6.92 km" />
            <Stat label="Elev Gain" value="152 m" />
            <Stat label="Time" value="15h 2m" />
          </dl>
          <div className="relative">
            <RouteMap />
            <span className="absolute top-12 left-12 rounded-md bg-white px-3 text-[33px] leading-[51px] font-bold">Start and end hidden</span>
          </div>
          <Actions />
        </article>
        <div className="h-2 bg-linear-to-b from-[#fbfbfb] to-[#f2f2f2]" />
      </main>

      <nav aria-label="Main" className="grid grid-cols-5 bg-white pt-[15px] pb-20">
        <NavItem label="Home" icon={<span className="pt-1"><HomeIcon /></span>} badge="30" />
        <NavItem label="Maps" icon={<MapsIcon />} />
        <NavItem label="Record" icon={<RecordIcon />} />
        <NavItem label="Groups" icon={<GroupsIcon />} />
        <NavItem label="You" icon={<YouIcon />} active />
      </nav>

      <span className="absolute top-[592px] right-[9px] h-[108px] w-[9px] rounded-full bg-[#cbcbcb]" />
    </div>
  );
}
